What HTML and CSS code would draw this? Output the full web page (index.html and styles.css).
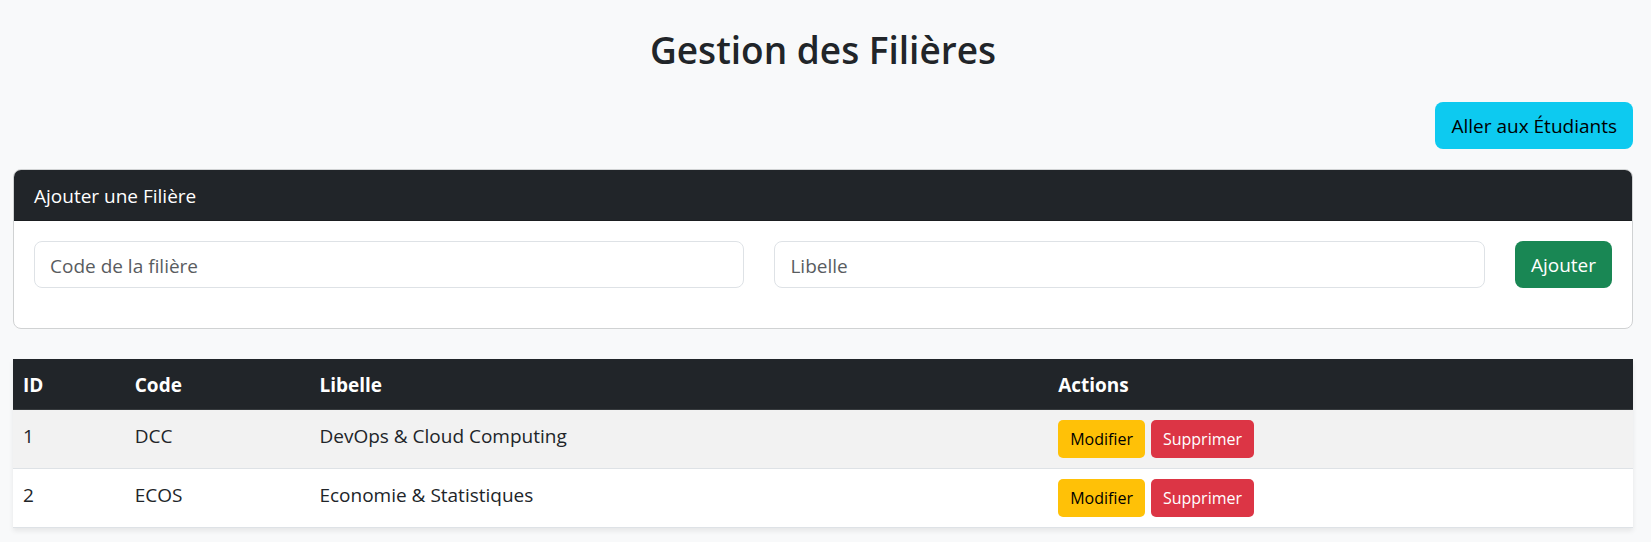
FILE: index.html
```html
<!DOCTYPE html>
<html lang="fr">
<head>
  <meta charset="utf-8">
  <meta name="viewport" content="width=device-width, initial-scale=1">
  <title>Gestion des Filières</title>
  <link rel="stylesheet" href="styles.css">
</head>
<body>
  <main class="page">
    <h1 class="page-title">Gestion des Filières</h1>

    <nav class="page-nav">
      <a class="btn btn-info" href="#etudiants">Aller aux Étudiants</a>
    </nav>

    <section class="card">
      <div class="card-header">Ajouter une Filière</div>
      <form class="card-body">
        <input class="field" type="text" name="code" placeholder="Code de la filière" aria-label="Code de la filière">
        <input class="field" type="text" name="libelle" placeholder="Libelle" aria-label="Libelle">
        <button class="btn btn-success" type="submit">Ajouter</button>
      </form>
    </section>

    <table class="table">
      <colgroup>
        <col class="col-id">
        <col class="col-code">
        <col class="col-libelle">
        <col class="col-actions">
      </colgroup>
      <thead>
        <tr>
          <th scope="col">ID</th>
          <th scope="col">Code</th>
          <th scope="col">Libelle</th>
          <th scope="col">Actions</th>
        </tr>
      </thead>
      <tbody>
        <tr>
          <td>1</td>
          <td>DCC</td>
          <td>DevOps &amp; Cloud Computing</td>
          <td>
            <div class="actions">
              <button class="btn btn-sm btn-warning" type="button">Modifier</button>
              <button class="btn btn-sm btn-danger" type="button">Supprimer</button>
            </div>
          </td>
        </tr>
        <tr>
          <td>2</td>
          <td>ECOS</td>
          <td>Economie &amp; Statistiques</td>
          <td>
            <div class="actions">
              <button class="btn btn-sm btn-warning" type="button">Modifier</button>
              <button class="btn btn-sm btn-danger" type="button">Supprimer</button>
            </div>
          </td>
        </tr>
      </tbody>
    </table>
  </main>
</body>
</html>
```
FILE: styles.css
```css
*,
*::before,
*::after {
  box-sizing: border-box;
}

body {
  margin: 0;
  background: #f8f9fa;
  color: #212529;
  font-family: "Segoe UI", "Open Sans", "Noto Sans", sans-serif;
  font-size: 19px;
  line-height: 30px;
}

.page {
  padding: 26px 18px 12px 13px;
}

.page-title {
  margin: 0 0 28px;
  font-size: 37px;
  font-weight: 600;
  line-height: 48px;
  text-align: center;
}

.page-nav {
  display: flex;
  justify-content: flex-end;
  margin-bottom: 20px;
}

.btn {
  padding: 9px 15px 7px;
  border: 1px solid transparent;
  border-radius: 8px;
  font: inherit;
  line-height: 29px;
  text-align: center;
  text-decoration: none;
  white-space: nowrap;
  cursor: pointer;
}

.btn-info {
  background: #0dcaf0;
  color: #000;
}

.btn-success {
  background: #198754;
  color: #fff;
}

.btn-warning {
  background: #ffc107;
  color: #000;
}

.btn-danger {
  background: #dc3545;
  color: #fff;
}

.btn-sm {
  padding: 5px 11px;
  border-radius: 5px;
  font-size: 16px;
  line-height: 26px;
}

.card {
  margin-bottom: 30px;
  border: 1px solid #d0d2d3;
  border-radius: 8px;
  background: #fff;
  overflow: hidden;
}

.card-header {
  padding: 11px 20px 9px;
  border-bottom: 1px solid #1b1e21;
  background: #212529;
  color: #fff;
}

.card-body {
  display: flex;
  gap: 30px;
  padding: 20px 20px 40px;
}

.field {
  flex: 1;
  min-width: 0;
  height: 47px;
  padding: 9px 15px 7px;
  border: 1px solid #dee2e6;
  border-radius: 8px;
  background: #fff;
  color: #212529;
  font: inherit;
  line-height: 29px;
}

.field::placeholder {
  color: #595c5f;
  opacity: 1;
}

.table {
  width: 100%;
  table-layout: fixed;
  border-collapse: separate;
  border-spacing: 0;
  background: #fff;
  box-shadow: 0 3px 5px rgba(0, 0, 0, 0.075);
  line-height: 32px;
}

.col-id {
  width: 6.9%;
}

.col-code {
  width: 11.4%;
}

.col-libelle {
  width: 45.6%;
}

.table th,
.table td {
  padding: 10px;
  border-bottom: 1px solid #dee2e6;
  text-align: left;
  vertical-align: top;
}

.table th {
  padding-bottom: 8px;
  border-bottom-color: #373b3e;
  background: #212529;
  color: #fff;
  font-weight: 700;
}

.table tbody tr:nth-child(odd) {
  background: #f2f2f2;
}

.actions {
  display: flex;
  gap: 6px;
}
```
